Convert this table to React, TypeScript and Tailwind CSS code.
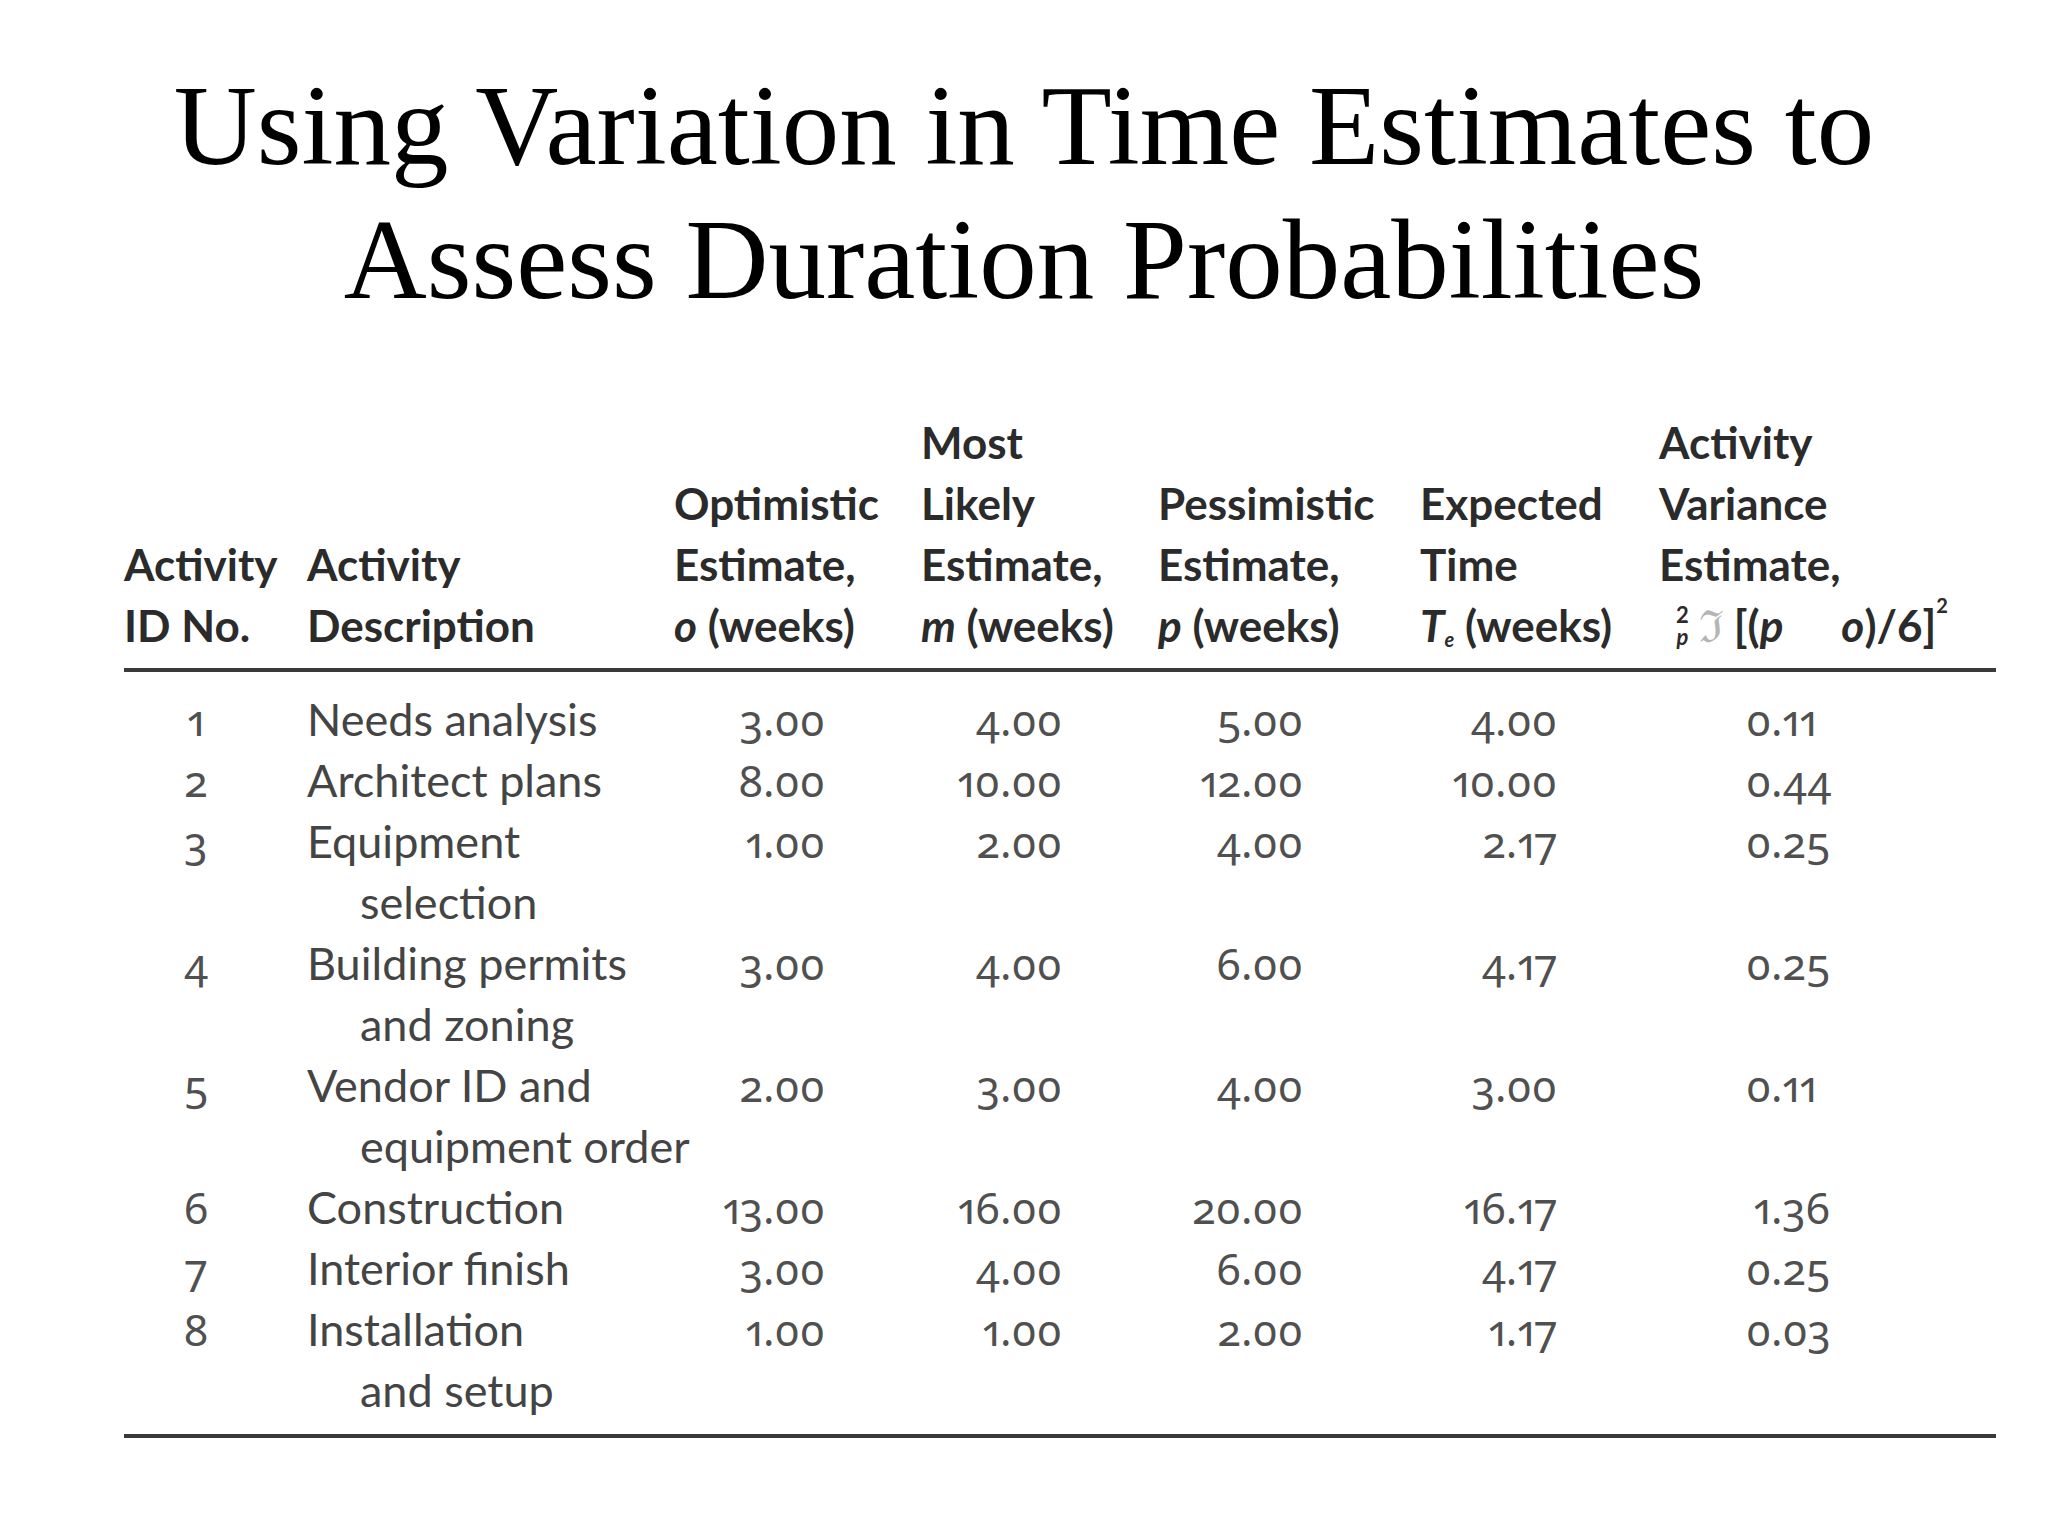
import React from 'react';

type Row = { id: string; desc: string[]; o: string; m: string; p: string; te: string; v: string };

const ROWS: Row[] = [
  { id: '1', desc: ['Needs analysis'], o: '3.00', m: '4.00', p: '5.00', te: '4.00', v: '0.11' },
  { id: '2', desc: ['Architect plans'], o: '8.00', m: '10.00', p: '12.00', te: '10.00', v: '0.44' },
  { id: '3', desc: ['Equipment', 'selection'], o: '1.00', m: '2.00', p: '4.00', te: '2.17', v: '0.25' },
  { id: '4', desc: ['Building permits', 'and zoning'], o: '3.00', m: '4.00', p: '6.00', te: '4.17', v: '0.25' },
  { id: '5', desc: ['Vendor ID and', 'equipment order'], o: '2.00', m: '3.00', p: '4.00', te: '3.00', v: '0.11' },
  { id: '6', desc: ['Construction'], o: '13.00', m: '16.00', p: '20.00', te: '16.17', v: '1.36' },
  { id: '7', desc: ['Interior finish'], o: '3.00', m: '4.00', p: '6.00', te: '4.17', v: '0.25' },
  { id: '8', desc: ['Installation', 'and setup'], o: '1.00', m: '1.00', p: '2.00', te: '1.17', v: '0.03' },
];

const GRID = 'grid grid-cols-[183px_367px_247px_237px_262px_239px_337px]';
// old-style figures, as in the printed table
const FIG = "text-[#505050] font-['Noto_Sans',sans-serif] text-[43px] oldstyle-nums proportional-nums";
const NUM = `text-right ${FIG}`;

const App: React.FC = () => {
  return (
    <div className="min-h-screen w-[2048px] bg-white">
      {/* slide title */}
      <h1 className="pt-[59px] text-center text-[115px] leading-[134px] text-black font-['Liberation_Serif','Times_New_Roman',serif]">
        Using Variation in Time Estimates to
        <br />
        Assess Duration Probabilities
      </h1>

      <div className="mx-[124px] mt-[85px] w-[1872px] font-['Lato','Open_Sans',sans-serif]">
        {/* header */}
        <div className={`${GRID} items-end pb-[12px] text-[44px] leading-[61px] font-bold text-[#2b2b2b]`}>
          <div className="flex flex-col">
            <span>Activity</span>
            <span>ID No.</span>
          </div>
          <div className="flex flex-col">
            <span>Activity</span>
            <span>Description</span>
          </div>
          <div className="flex flex-col">
            <span>Optimistic</span>
            <span>Estimate,</span>
            <span><i>o</i> (weeks)</span>
          </div>
          <div className="flex flex-col">
            <span>Most</span>
            <span>Likely</span>
            <span>Estimate,</span>
            <span><i>m</i> (weeks)</span>
          </div>
          <div className="flex flex-col">
            <span>Pessimistic</span>
            <span>Estimate,</span>
            <span><i>p</i> (weeks)</span>
          </div>
          <div className="flex flex-col">
            <span>Expected</span>
            <span>Time</span>
            <span className="whitespace-nowrap">
              <i>T</i>
              <sub className="text-[20px] italic">e</sub> (weeks)
            </span>
          </div>
          <div className="flex flex-col">
            <span>Activity</span>
            <span>Variance</span>
            <span>Estimate,</span>
            <span className="flex items-center whitespace-nowrap pl-[17px]">
              <span className="inline-flex flex-col items-center text-[22px] leading-[22px]">
                <span>2</span>
                <i>p</i>
              </span>
              <span className="ml-[10px] font-normal text-[#b5b5b5]">ℑ</span>
              <span className="ml-[10px]">[(<i>p</i></span>
              <span className="ml-[58px]"><i>o</i>)/6]</span>
              <sup className="text-[20px] -mt-[22px]">2</sup>
            </span>
          </div>
        </div>

        <div className="h-[4px] bg-[#3a3a3a]" />

        {/* body */}
        <div className="flex flex-col pt-[17px] pb-[13px] text-[45px] leading-[61px] text-[#444]">
          {ROWS.map((r) => {
            const [vi, vf] = r.v.split('.');
            return (
              <div key={r.id} className={`${GRID} items-start`}>
                <div className={`w-[144px] text-center ${FIG}`}>{r.id}</div>
                <div className="flex flex-col whitespace-nowrap">
                  {r.desc.map((line, i) => (
                    <span key={i} className={i > 0 ? 'pl-[53px]' : ''}>
                      {line}
                    </span>
                  ))}
                </div>
                <div className={`w-[151px] ${NUM}`}>{r.o}</div>
                <div className={`w-[141px] ${NUM}`}>{r.m}</div>
                <div className={`w-[145px] ${NUM}`}>{r.p}</div>
                <div className={`w-[137px] ${NUM}`}>{r.te}</div>
                {/* variance column is aligned on the decimal point */}
                <div className={`pl-[87px] whitespace-nowrap ${FIG}`}>
                  <span className="inline-block w-[25px] text-right">{vi}</span>.{vf}
                </div>
              </div>
            );
          })}
        </div>

        <div className="h-[4px] bg-[#3a3a3a]" />
      </div>
    </div>
  );
};

export default App;
